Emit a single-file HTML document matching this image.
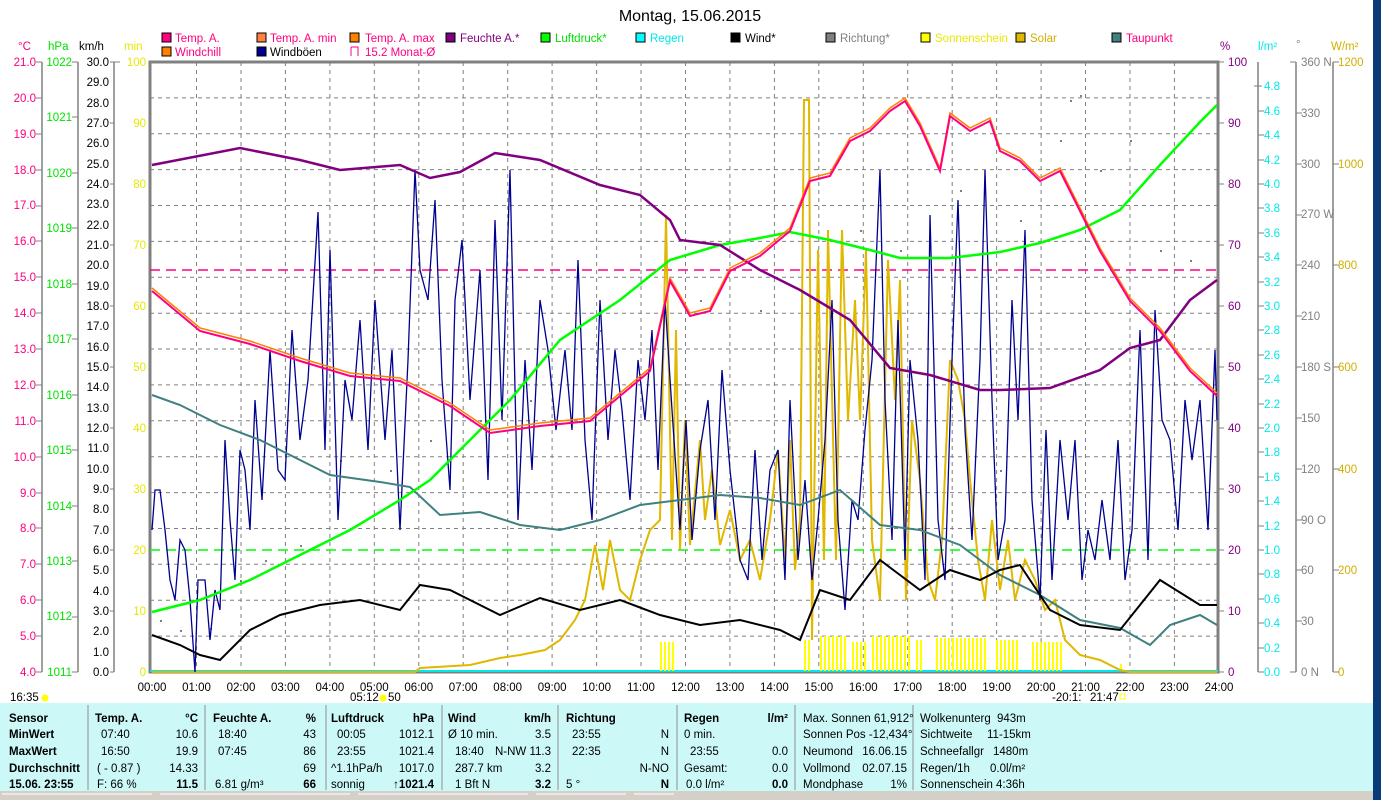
<!DOCTYPE html>
<html><head><meta charset="utf-8"><style>
html,body{margin:0;padding:0;background:#fff;width:1381px;height:800px;overflow:hidden}
svg{display:block;font-family:"Liberation Sans",sans-serif}
</style></head><body>
<svg width="1381" height="800" viewBox="0 0 1381 800" xmlns="http://www.w3.org/2000/svg">
<defs><pattern id="sun" width="4" height="10" patternUnits="userSpaceOnUse"><rect width="2" height="10" fill="#ffff00"/></pattern></defs>
<rect width="1381" height="800" fill="#fff"/>
<text x="690" y="21" font-size="16" text-anchor="middle" fill="#000">Montag, 15.06.2015</text>
<!-- legend -->
<g font-size="11.5" stroke="#000" stroke-width="1">
<rect x="162" y="33" width="9" height="9" fill="#ff0080"/><rect x="257" y="33" width="9" height="9" fill="#ff8040"/><rect x="350" y="33" width="9" height="9" fill="#ff8000"/><rect x="446" y="33" width="9" height="9" fill="#800080"/><rect x="541" y="33" width="9" height="9" fill="#00ff00"/><rect x="636" y="33" width="9" height="9" fill="#00ffff"/><rect x="731" y="33" width="9" height="9" fill="#000"/><rect x="826" y="33" width="9" height="9" fill="#808080"/><rect x="921" y="33" width="9" height="9" fill="#ffff00"/><rect x="1016" y="33" width="9" height="9" fill="#e0b800"/><rect x="1112" y="33" width="9" height="9" fill="#408080"/>
<rect x="162" y="47" width="9" height="9" fill="#ff8000"/><rect x="257" y="47" width="9" height="9" fill="#000090"/>
<path d="M351 47v9M351 47h7v9" stroke="#ff0080" fill="none"/>
</g>
<g font-size="11.5" stroke="none">
<text x="175" y="42" fill="#ff0080">Temp. A.</text><text x="270" y="42" fill="#ff0080">Temp. A. min</text><text x="365" y="42" fill="#ff0080">Temp. A. max</text><text x="460" y="42" fill="#800080">Feuchte A.*</text><text x="555" y="42" fill="#00e000">Luftdruck*</text><text x="650" y="42" fill="#00e8e8">Regen</text><text x="745" y="42" fill="#000">Wind*</text><text x="840" y="42" fill="#808080">Richtung*</text><text x="935" y="42" fill="#e8e800">Sonnenschein</text><text x="1030" y="42" fill="#d0b000">Solar</text><text x="1126" y="42" fill="#ff0080">Taupunkt</text>
<text x="175" y="56" fill="#ff0080">Windchill</text><text x="270" y="56" fill="#000">Windböen</text><text x="365" y="56" fill="#ff0080">15.2 Monat-Ø</text>
</g>
<!-- axis headers -->
<g font-size="11.5">
<text x="18" y="50" fill="#ff0080">°C</text><text x="48" y="50" fill="#00e000">hPa</text><text x="79" y="50" fill="#000">km/h</text><text x="124" y="50" fill="#e8e800">min</text>
<text x="1220" y="50" fill="#800080">%</text><text x="1258" y="50" fill="#00e8e8">l/m²</text><text x="1296" y="48" fill="#808080">°</text><text x="1331" y="50" fill="#d0b000">W/m²</text>
</g>
<!-- axis lines -->
<g stroke="#808080" stroke-width="1.5">
<line x1="42" y1="62" x2="42" y2="672"/><line x1="78" y1="62" x2="78" y2="672"/><line x1="114" y1="62" x2="114" y2="672"/>
<line x1="1258" y1="62" x2="1258" y2="672"/><line x1="1296" y1="62" x2="1296" y2="672"/><line x1="1333" y1="62" x2="1333" y2="672"/>
</g>
<!-- plot grid -->
<g stroke="#808080" stroke-dasharray="4,4" stroke-width="1">
<path d="M150 97.9H1218M150 133.8H1218M150 169.6H1218M150 205.5H1218M150 241.4H1218M150 277.3H1218M150 313.2H1218M150 349H1218M150 384.9H1218M150 420.8H1218M150 456.7H1218M150 492.6H1218M150 528.5H1218M150 564.3H1218M150 600.2H1218M150 636.1H1218"/>
<path d="M196.5 62V672M241 62V672M285.4 62V672M329.9 62V672M374.3 62V672M418.8 62V672M463.2 62V672M507.7 62V672M552.1 62V672M596.6 62V672M641 62V672M685.5 62V672M729.9 62V672M774.4 62V672M818.8 62V672M863.3 62V672M907.7 62V672M952.2 62V672M996.6 62V672M1041.1 62V672M1085.5 62V672M1130 62V672M1174.4 62V672"/>
</g>
<rect x="150" y="62" width="1068" height="610" fill="none" stroke="#808080" stroke-width="3"/>
<!-- left labels -->
<g font-size="11.5" fill="#ff0080" text-anchor="end">
<text x="36" y="66">21.0</text><text x="36" y="102">20.0</text><text x="36" y="138">19.0</text><text x="36" y="174">18.0</text><text x="36" y="209">17.0</text><text x="36" y="245">16.0</text><text x="36" y="281">15.0</text><text x="36" y="317">14.0</text><text x="36" y="353">13.0</text><text x="36" y="389">12.0</text><text x="36" y="425">11.0</text><text x="36" y="461">10.0</text><text x="36" y="497">9.0</text><text x="36" y="532">8.0</text><text x="36" y="568">7.0</text><text x="36" y="604">6.0</text><text x="36" y="640">5.0</text><text x="36" y="676">4.0</text>
</g>
<g font-size="11.5" fill="#00e000" text-anchor="end">
<text x="72" y="66">1022</text><text x="72" y="121">1021</text><text x="72" y="177">1020</text><text x="72" y="232">1019</text><text x="72" y="288">1018</text><text x="72" y="343">1017</text><text x="72" y="399">1016</text><text x="72" y="454">1015</text><text x="72" y="510">1014</text><text x="72" y="565">1013</text><text x="72" y="620">1012</text><text x="72" y="676">1011</text>
</g>
<g font-size="11.5" fill="#000" text-anchor="end">
<text x="109" y="66">30.0</text><text x="109" y="86">29.0</text><text x="109" y="107">28.0</text><text x="109" y="127">27.0</text><text x="109" y="147">26.0</text><text x="109" y="168">25.0</text><text x="109" y="188">24.0</text><text x="109" y="208">23.0</text><text x="109" y="229">22.0</text><text x="109" y="249">21.0</text><text x="109" y="269">20.0</text><text x="109" y="290">19.0</text><text x="109" y="310">18.0</text><text x="109" y="330">17.0</text><text x="109" y="351">16.0</text><text x="109" y="371">15.0</text><text x="109" y="391">14.0</text><text x="109" y="412">13.0</text><text x="109" y="432">12.0</text><text x="109" y="452">11.0</text><text x="109" y="473">10.0</text><text x="109" y="493">9.0</text><text x="109" y="513">8.0</text><text x="109" y="534">7.0</text><text x="109" y="554">6.0</text><text x="109" y="574">5.0</text><text x="109" y="595">4.0</text><text x="109" y="615">3.0</text><text x="109" y="635">2.0</text><text x="109" y="656">1.0</text><text x="109" y="676">0.0</text>
</g>
<g font-size="11.5" fill="#e8e800" text-anchor="end">
<text x="146" y="66">100</text><text x="146" y="127">90</text><text x="146" y="188">80</text><text x="146" y="249">70</text><text x="146" y="310">60</text><text x="146" y="371">50</text><text x="146" y="432">40</text><text x="146" y="493">30</text><text x="146" y="554">20</text><text x="146" y="615">10</text><text x="146" y="676">0</text>
</g>
<!-- right labels -->
<g font-size="11.5" fill="#800080">
<text x="1228" y="66">100</text><text x="1228" y="127">90</text><text x="1228" y="188">80</text><text x="1228" y="249">70</text><text x="1228" y="310">60</text><text x="1228" y="371">50</text><text x="1228" y="432">40</text><text x="1228" y="493">30</text><text x="1228" y="554">20</text><text x="1228" y="615">10</text><text x="1228" y="676">0</text>
</g>
<g font-size="11.5" fill="#00e8e8">
<text x="1264" y="90">4.8</text><text x="1264" y="115">4.6</text><text x="1264" y="139">4.4</text><text x="1264" y="164">4.2</text><text x="1264" y="188">4.0</text><text x="1264" y="212">3.8</text><text x="1264" y="237">3.6</text><text x="1264" y="261">3.4</text><text x="1264" y="286">3.2</text><text x="1264" y="310">3.0</text><text x="1264" y="334">2.8</text><text x="1264" y="359">2.6</text><text x="1264" y="383">2.4</text><text x="1264" y="408">2.2</text><text x="1264" y="432">2.0</text><text x="1264" y="456">1.8</text><text x="1264" y="481">1.6</text><text x="1264" y="505">1.4</text><text x="1264" y="530">1.2</text><text x="1264" y="554">1.0</text><text x="1264" y="578">0.8</text><text x="1264" y="603">0.6</text><text x="1264" y="627">0.4</text><text x="1264" y="652">0.2</text><text x="1264" y="676">0.0</text>
</g>
<g font-size="11.5" fill="#808080">
<text x="1301" y="66">360 N</text><text x="1301" y="117">330</text><text x="1301" y="168">300</text><text x="1301" y="218">270 W</text><text x="1301" y="269">240</text><text x="1301" y="320">210</text><text x="1301" y="371">180 S</text><text x="1301" y="422">150</text><text x="1301" y="473">120</text><text x="1301" y="524">90 O</text><text x="1301" y="574">60</text><text x="1301" y="625">30</text><text x="1301" y="676">0 N</text>
</g>
<g font-size="11.5" fill="#d0b000">
<text x="1338" y="66">1200</text><text x="1338" y="168">1000</text><text x="1338" y="269">800</text><text x="1338" y="371">600</text><text x="1338" y="473">400</text><text x="1338" y="574">200</text><text x="1338" y="676">0</text>
</g>
<!-- ticks -->
<g stroke="#808080" stroke-width="1">
<path d="M36 62h6M36 98h6M36 134h6M36 170h6M36 206h6M36 241h6M36 277h6M36 313h6M36 349h6M36 385h6M36 421h6M36 457h6M36 493h6M36 528h6M36 564h6M36 600h6M36 636h6M36 672h6"/>
<path d="M72 62h6M72 117h6M72 173h6M72 228h6M72 284h6M72 339h6M72 395h6M72 450h6M72 506h6M72 561h6M72 617h6M72 672h6"/>
<path d="M110 62h4M110 123h4M110 184h4M110 245h4M110 306h4M110 367h4M110 428h4M110 489h4M110 550h4M110 611h4M110 672h4M114 62h6"/>
<path d="M1218 62h6M1218 123h6M1218 184h6M1218 245h6M1218 306h6M1218 367h6M1218 428h6M1218 489h6M1218 550h6M1218 611h6M1218 672h6"/>
<path d="M1254 86h8M1258 111h6M1258 135h6M1258 160h6M1258 184h6M1258 208h6M1258 233h6M1258 257h6M1258 282h6M1258 306h6M1258 330h6M1258 355h6M1258 379h6M1258 404h6M1258 428h6M1258 452h6M1258 477h6M1258 501h6M1258 526h6M1258 550h6M1258 574h6M1258 599h6M1258 623h6M1258 648h6M1258 672h6"/>
<path d="M1290 62h6M1296 113h6M1296 164h6M1296 215h6M1296 265h6M1296 316h6M1296 367h6M1296 418h6M1296 469h6M1296 520h6M1296 570h6M1296 621h6M1290 672h6"/>
<path d="M1333 62h6M1333 164h6M1333 265h6M1333 367h6M1333 469h6M1333 570h6M1333 672h6"/>
</g>
<!-- reference lines -->
<line x1="150" y1="270" x2="1218" y2="270" stroke="#ff0080" stroke-width="1.5" stroke-dasharray="10,6"/>
<line x1="150" y1="550" x2="1218" y2="550" stroke="#00ff00" stroke-width="1.5" stroke-dasharray="10,6"/>
<line x1="150" y1="671" x2="1218" y2="671" stroke="#00e8e8" stroke-width="2"/>
<!-- sunshine bars -->
<g fill="url(#sun)">
<rect x="659" y="642" width="17" height="29"/><rect x="804" y="640" width="8" height="31"/><rect x="818" y="636" width="30" height="35"/><rect x="852" y="642" width="16" height="29"/><rect x="872" y="636" width="38" height="35"/><rect x="916" y="640" width="6" height="31"/><rect x="936" y="638" width="52" height="33"/><rect x="996" y="640" width="22" height="31"/><rect x="1030" y="642" width="32" height="29"/><rect x="1120" y="664" width="4" height="7"/>
</g>
<!-- gray dots -->
<g fill="#808080">
<rect x="160" y="620" width="2" height="2"/><rect x="180" y="630" width="2" height="2"/><rect x="210" y="628" width="2" height="2"/><rect x="240" y="580" width="2" height="2"/><rect x="265" y="560" width="2" height="2"/><rect x="300" y="545" width="2" height="2"/><rect x="340" y="460" width="2" height="2"/><rect x="390" y="470" width="2" height="2"/><rect x="430" y="440" width="2" height="2"/><rect x="480" y="420" width="2" height="2"/><rect x="530" y="400" width="2" height="2"/><rect x="600" y="330" width="2" height="2"/><rect x="700" y="300" width="2" height="2"/><rect x="760" y="310" width="2" height="2"/><rect x="860" y="230" width="2" height="2"/><rect x="900" y="250" width="2" height="2"/><rect x="960" y="190" width="2" height="2"/><rect x="1020" y="220" width="2" height="2"/><rect x="1070" y="100" width="2" height="2"/><rect x="1080" y="95" width="2" height="2"/><rect x="1100" y="170" width="2" height="2"/><rect x="1130" y="140" width="2" height="2"/><rect x="1160" y="250" width="2" height="2"/><rect x="1190" y="260" width="2" height="2"/><rect x="1060" y="140" width="2" height="2"/><rect x="1000" y="470" width="2" height="2"/></g>
<!-- solar -->
<polyline fill="none" stroke="#e0b800" stroke-width="2" points="152,672 415,672 420,668 470,665 500,658 520,655 545,650 560,640 575,620 585,600 595,545 603,590 610,540 620,590 630,600 640,560 650,530 660,520 666,215 672,540 676,330 680,550 685,420 690,545 700,440 705,520 712,470 720,545 730,510 740,560 750,540 760,580 770,520 778,450 785,560 790,440 795,570 800,520 804,100 809,100 812,640 818,250 824,560 828,230 836,560 842,230 848,420 855,300 860,420 866,250 872,540 880,600 888,260 895,400 900,280 906,600 912,420 920,480 928,580 935,600 942,540 950,360 958,380 965,420 970,480 978,560 985,600 992,520 1000,590 1008,540 1015,600 1025,560 1035,580 1045,610 1055,600 1065,640 1080,655 1100,660 1120,670 1130,672 1217,672"/>
<!-- gusts -->
<polyline fill="none" stroke="#000090" stroke-width="1.3" points="152,530 155,490 160,490 165,530 170,580 175,600 180,540 185,550 190,600 195,672 198,580 205,580 210,640 215,590 220,610 225,440 230,520 235,580 240,450 245,470 250,530 255,400 262,500 270,350 278,470 285,480 292,330 300,440 308,380 318,212 325,450 330,250 338,520 345,380 352,420 360,320 368,450 375,300 385,440 392,350 400,530 408,360 415,170 420,270 428,300 435,200 442,380 450,490 455,300 462,240 470,400 480,270 488,480 495,220 502,420 510,170 518,520 525,360 532,470 540,300 548,350 556,430 565,350 572,430 578,260 585,440 592,520 600,300 608,440 615,350 622,410 630,500 638,360 645,420 652,330 658,470 665,300 672,410 680,530 686,420 692,540 700,450 708,400 715,520 722,370 730,470 740,560 748,580 755,450 762,560 770,470 778,450 785,580 790,400 798,560 805,480 812,580 818,520 825,440 832,300 838,520 845,610 852,500 858,520 865,430 872,360 880,170 885,400 892,540 898,320 905,560 910,360 918,440 925,580 930,215 938,520 945,580 952,360 958,200 965,430 972,540 980,360 985,170 992,400 998,560 1005,520 1012,300 1018,420 1025,230 1032,500 1040,600 1046,430 1052,580 1060,440 1068,520 1075,440 1082,580 1088,530 1095,560 1102,500 1110,560 1118,440 1125,580 1132,530 1140,330 1148,560 1155,310 1162,420 1170,440 1178,530 1185,400 1192,460 1200,400 1208,530 1215,350 1217,420"/>
<!-- dewpoint -->
<polyline fill="none" stroke="#408080" stroke-width="2" points="152,395 180,405 220,425 260,440 300,460 330,475 380,482 410,487 440,515 480,512 520,525 560,530 600,520 640,505 680,500 720,495 760,498 800,505 840,490 880,525 920,530 960,545 1000,575 1040,595 1080,620 1120,628 1150,645 1170,625 1200,615 1217,625"/>
<!-- pressure -->
<polyline fill="none" stroke="#00ff00" stroke-width="2.5" points="152,612 200,600 250,580 300,555 350,530 400,500 430,480 470,440 510,400 560,340 620,300 670,260 720,245 760,238 790,232 830,240 870,250 900,258 950,258 1000,252 1040,243 1080,230 1120,210 1160,165 1200,122 1217,105"/>
<!-- humidity -->
<polyline fill="none" stroke="#800080" stroke-width="2.5" points="152,165 240,148 300,160 340,170 400,165 430,178 460,172 495,153 540,160 600,185 640,195 670,220 680,240 720,245 760,270 800,290 850,320 890,368 930,375 980,390 1000,390 1050,388 1100,370 1130,348 1160,340 1190,300 1217,280"/>
<!-- temp -->
<polyline fill="none" stroke="#ff8000" stroke-width="1.5" points="152,288 200,328 250,341 300,358 350,373 400,378 450,403 490,430 540,423 590,418 620,393 650,368 670,278 690,313 710,308 730,268 760,253 790,228 810,178 830,173 850,138 870,128 890,108 905,98 920,123 940,168 950,113 970,128 990,118 1000,148 1020,158 1040,178 1060,168 1080,208 1100,248 1130,298 1160,328 1190,368 1217,393"/>
<polyline fill="none" stroke="#ff0080" stroke-width="2" points="152,291 200,331 250,344 300,361 350,376 400,381 450,406 490,433 540,426 590,421 620,396 650,371 670,281 690,316 710,311 730,271 760,256 790,231 810,181 830,176 850,141 870,131 890,111 905,101 920,126 940,171 950,116 970,131 990,121 1000,151 1020,161 1040,181 1060,171 1080,211 1100,251 1130,301 1160,331 1190,371 1217,396"/>
<!-- wind -->
<polyline fill="none" stroke="#000" stroke-width="2" points="152,635 180,645 200,655 220,660 250,630 280,615 320,605 360,600 400,610 420,585 450,590 480,605 500,615 540,598 580,610 620,600 660,615 700,625 740,620 780,630 800,640 820,590 850,600 880,560 900,575 920,590 950,570 980,580 1000,570 1020,565 1050,610 1080,625 1120,630 1160,580 1200,605 1217,605"/>
<!-- time labels -->
<g font-size="11.5" fill="#000" text-anchor="middle">
<text x="152" y="691">00:00</text><text x="196.5" y="691">01:00</text><text x="241" y="691">02:00</text><text x="285.4" y="691">03:00</text><text x="329.9" y="691">04:00</text><text x="374.3" y="691">05:00</text><text x="418.8" y="691">06:00</text><text x="463.2" y="691">07:00</text><text x="507.7" y="691">08:00</text><text x="552.1" y="691">09:00</text><text x="596.6" y="691">10:00</text><text x="641" y="691">11:00</text><text x="685.5" y="691">12:00</text><text x="729.9" y="691">13:00</text><text x="774.4" y="691">14:00</text><text x="818.8" y="691">15:00</text><text x="863.3" y="691">16:00</text><text x="907.7" y="691">17:00</text><text x="952.2" y="691">18:00</text><text x="996.6" y="691">19:00</text><text x="1041.1" y="691">20:00</text><text x="1085.5" y="691">21:00</text><text x="1130" y="691">22:00</text><text x="1174.4" y="691">23:00</text><text x="1219" y="691">24:00</text>
</g>
<g font-size="11.5" fill="#000">
<text x="10" y="701">16:35</text><circle cx="45" cy="698" r="3.5" fill="#ffff00"/>
<text x="350" y="701">05:12</text><circle cx="383" cy="698" r="3.5" fill="#ffff00"/><text x="388" y="701">50</text>
<text x="1052" y="701" fill="#000">-20:1:</text><text x="1090" y="701">21:47</text><rect x="1120" y="694" width="5" height="5" fill="none" stroke="#ffff00"/>
</g>
<!-- table -->
<rect x="0" y="703" width="1373" height="88" fill="#ccf8f8"/>
<g stroke="#909090" stroke-width="1"><path d="M88 705V790M205 705V790M326 705V790M442 705V790M558 705V790M677 705V790M795 705V790M913 705V790"/></g>
<rect x="0" y="791" width="1373" height="9" fill="#d4d0c8"/>
<path d="M2 794h150M160 794h190M358 794h170M536 794h90M634 794h40" stroke="#fff"/>
<rect x="1373" y="0" width="8" height="800" fill="#0b3a78"/>
<g font-size="11.5" fill="#000" xml:space="preserve" style="white-space:pre">
<g font-weight="bold"><text x="9" y="722">Sensor</text><text x="9" y="738">MinWert</text><text x="9" y="755">MaxWert</text><text x="9" y="772">Durchschnitt</text><text x="9" y="788">15.06. 23:55</text>
<text x="95" y="722">Temp. A.</text><text x="213" y="722">Feuchte A.</text><text x="331" y="722">Luftdruck</text><text x="448" y="722">Wind</text><text x="566" y="722">Richtung</text><text x="684" y="722">Regen</text></g>
<g text-anchor="end" font-weight="bold"><text x="198" y="722">°C</text><text x="316" y="722">%</text><text x="434" y="722">hPa</text><text x="551" y="722">km/h</text><text x="788" y="722">l/m²</text>
<text x="198" y="788">11.5</text><text x="316" y="788">66</text><text x="434" y="788">↑1021.4</text><text x="551" y="788">3.2</text><text x="669" y="788">N</text><text x="788" y="788">0.0</text></g>
<text x="101" y="738">07:40</text><text x="101" y="755">16:50</text><text x="97" y="772">( - 0.87 )</text><text x="97" y="788">F: 66 %</text>
<g text-anchor="end"><text x="198" y="738">10.6</text><text x="198" y="755">19.9</text><text x="198" y="772">14.33</text>
<text x="316" y="738">43</text><text x="316" y="755">86</text><text x="316" y="772">69</text>
<text x="434" y="738">1012.1</text><text x="434" y="755">1021.4</text><text x="434" y="772">1017.0</text>
<text x="551" y="738">3.5</text><text x="551" y="755">N-NW 11.3</text><text x="551" y="772">3.2</text>
<text x="669" y="738">N</text><text x="669" y="755">N</text><text x="669" y="772">N-NO</text>
<text x="788" y="755">0.0</text><text x="788" y="772">0.0</text></g>
<text x="218" y="738">18:40</text><text x="218" y="755">07:45</text><text x="215" y="788">6.81 g/m³</text>
<text x="337" y="738">00:05</text><text x="337" y="755">23:55</text><text x="331" y="772">^1.1hPa/h</text><text x="331" y="788">sonnig</text>
<text x="448" y="738">Ø 10 min.</text><text x="455" y="755">18:40</text><text x="455" y="772">287.7 km</text><text x="455" y="788">1 Bft N</text>
<text x="572" y="738">23:55</text><text x="572" y="755">22:35</text><text x="566" y="788">5 °</text>
<text x="684" y="738">0 min.</text><text x="690" y="755">23:55</text><text x="684" y="772">Gesamt:</text><text x="686" y="788">0.0 l/m²</text>
<text x="803" y="722">Max. Sonnen 61,912°</text><text x="803" y="738">Sonnen Pos -12,434°</text><text x="803" y="755">Neumond</text><text x="907" y="755" text-anchor="end">16.06.15</text><text x="803" y="772">Vollmond</text><text x="907" y="772" text-anchor="end">02.07.15</text><text x="803" y="788">Mondphase</text><text x="907" y="788" text-anchor="end">1%</text>
<text x="920" y="722">Wolkenunterg</text><text x="997" y="722">943m</text><text x="920" y="738">Sichtweite</text><text x="987" y="738">11-15km</text><text x="920" y="755">Schneefallgr</text><text x="993" y="755">1480m</text><text x="920" y="772">Regen/1h</text><text x="990" y="772">0.0l/m²</text><text x="920" y="788">Sonnenschein</text><text x="996" y="788">4:36h</text>
</g>
</svg>
</body></html>
